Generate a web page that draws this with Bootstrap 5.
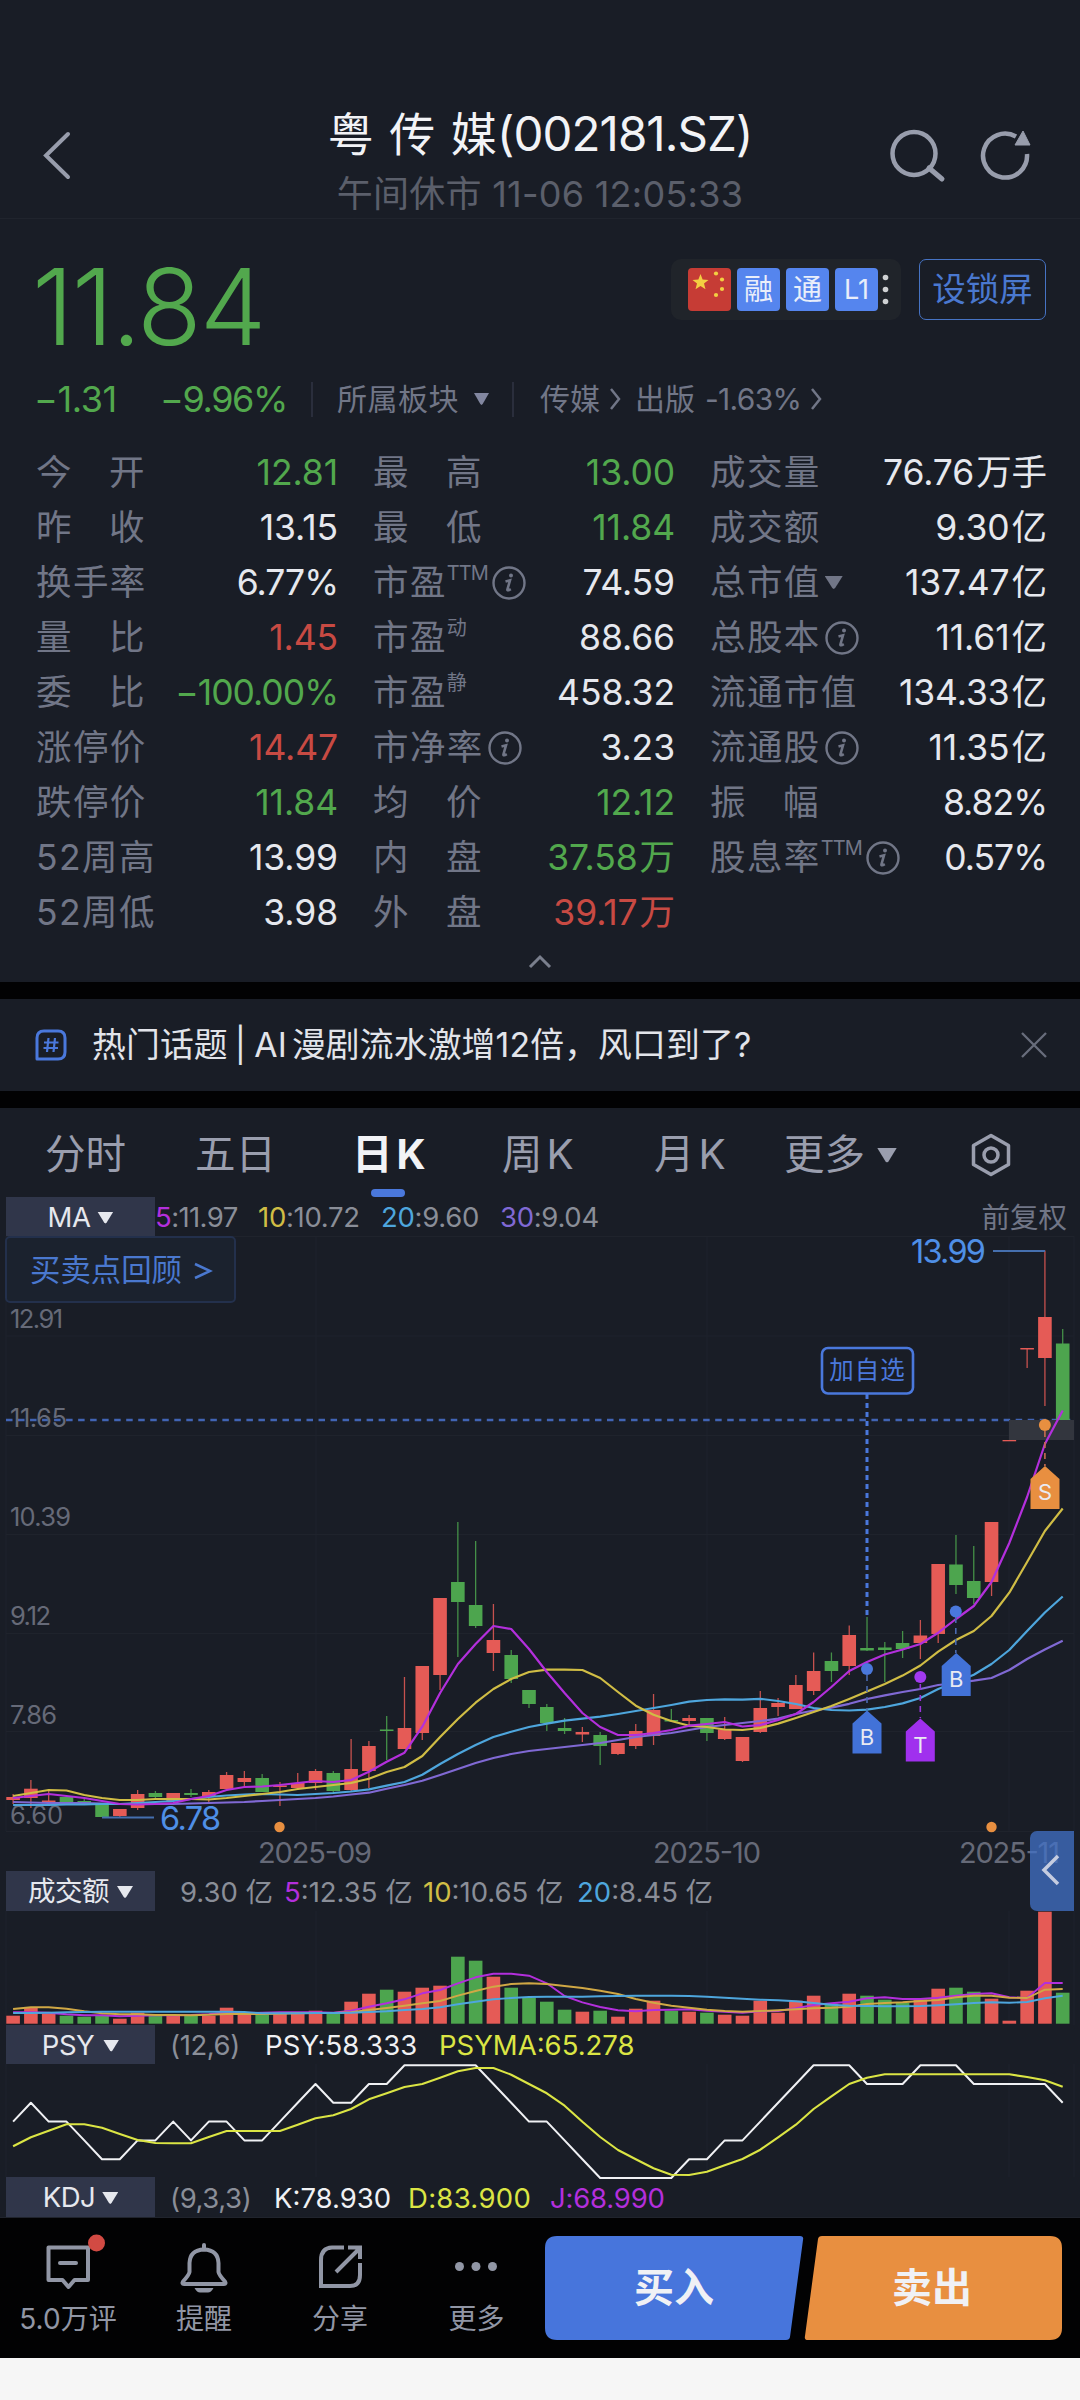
<!DOCTYPE html>
<html lang="zh-CN">
<head>
<meta charset="utf-8">
<meta name="viewport" content="width=device-width, initial-scale=1">
<title>粤传媒(002181.SZ)</title>
<link href="https://cdn.jsdelivr.net/npm/bootstrap@5.3.0/dist/css/bootstrap.min.css" rel="stylesheet">
<style>
:root{--ink:#e6e8ee;--dim:#717687;--soft:#8a8e98;--up:#c84a43;--down:#52a84d;--blue:#4a78dc;--panel:#191d26}
body{background:#f6f6f6;font-family:Inter,"Noto Sans CJK SC",sans-serif;color:var(--ink);line-height:1;width:1080px;margin:0}
svg{display:block;flex:none;overflow:visible}
.panel{background:var(--panel)}
.topbar{height:219px;padding:97px 50px 0 41px;border-bottom:1px solid #20242d}
.title{font-size:46px;line-height:74px;letter-spacing:.3px;word-spacing:2px;white-space:pre;color:#f2f3f6}
.title .lat{font-size:47.5px;letter-spacing:-.95px}
.subtitle{font-size:36px;line-height:46px;letter-spacing:.25px;color:#5b5f6b}
.quote{height:215px;padding:0 34px 0 36px}
.price{font-size:106px;font-weight:300;line-height:110px;letter-spacing:-2px;color:var(--down);margin-left:-4px;padding-top:33px}
.tags{background:#20242a;border-radius:10px;width:230px;height:61px;padding:0 9px 0 17px;gap:6px}
.tag{width:43px;height:43px;border-radius:4px;background:#5585ee;font-size:29px;color:#e9eefa}
.lockbtn{width:127px;height:61px;border:1.5px solid #4673c4;border-radius:7px;color:#4a78cf;font-size:33.5px;letter-spacing:0}
.chg{height:50px;color:var(--down);font-size:36px;margin-left:-2px}
.sect{font-size:30px;color:var(--dim)}
.vr1{width:2px;height:35px;background:#2a2e3c}
.stats{height:548px;padding:11px 33px 0 36px}
.stat{height:55px;font-size:35.5px}
.stat .k{color:var(--dim);letter-spacing:1.4px;display:flex;align-items:center}
.k3{width:110px;justify-content:space-between}
.stat .v{letter-spacing:-.1px;white-space:nowrap}
.stat .v small{font-size:inherit;margin-left:2px}
.stat .v.pc{letter-spacing:-1px}
.tiny{font-size:20px;letter-spacing:0;align-self:flex-start;margin-top:-2px}
.tiny.lat{letter-spacing:-.9px}
.up{color:var(--up)}.down{color:var(--down)}
.gap17{height:17px;background:#020203}
.topic{height:92px;padding:0 33px 0 35px;font-size:33.8px;color:#e2e4ea}
.tabs{height:89px;color:#9a9eae;font-size:40.5px}
.tabs .t{position:relative;height:89px;display:flex;align-items:center;padding-top:5px}
.tabs .t b{font-weight:inherit;margin-left:4px}
.tabs .on{color:#f2f3f6;font-weight:700;left:-1px}
.tabs .on::after{content:"";position:absolute;left:19px;bottom:0;width:34px;height:8px;border-radius:4px;background:#4a78dc}
.ind{height:39px;font-size:27.5px;color:var(--soft);padding-left:6px;white-space:pre}
.ind>span{padding-top:3px}
.pick{width:149px;height:39px;background:#30364a;color:#e6e8ee;letter-spacing:-.5px;padding-top:2px}
.tri{display:inline-block;width:16px;height:12px;background:currentColor;clip-path:polygon(0 0,100% 0,58% 92%,50% 100%,42% 92%)}
.review{position:absolute;left:5px;top:0;width:231px;height:67px;border:2px solid #23304c;border-radius:5px;background:#1b222e;color:#4a78cf;font-size:30.4px;padding-left:23px;padding-top:2px}
.drawer{position:absolute;left:1030px;top:595px;width:44px;height:80px;background:rgba(66,114,200,.75);border-radius:7px 0 0 7px;z-index:2}
.foot{background:#020203;height:141px;border-top:1px solid #20242d;color:#9196a5;font-size:28px}
.foot .item{height:139px;padding-top:16px}
.foot .item svg{margin-bottom:9px}
.trade{fill:#f0f1f5;font-size:40px;font-weight:700}
.m5{color:#b32fdc}.m10{color:#d0bd45}.m20{color:#4ea6dd}.m30{color:#8069d4}
.ax{fill:#666a78;font-size:25.5px}
.dt{fill:#666a78;font-size:29px}
</style>
<script src="https://cdn.jsdelivr.net/npm/bootstrap@5.3.0/dist/js/bootstrap.bundle.min.js"></script>
</head>
<body>
<svg width="0" height="0" class="position-absolute"><defs>
<symbol id="info" viewBox="0 0 34 34"><circle cx="17" cy="17" r="15.5" fill="none" stroke="#717687" stroke-width="2.4"/><circle cx="19" cy="9.5" r="2" fill="#717687"/><path d="M13.5 15.5l4.5-1.2-2.6 9.2q-.3 1.8 3.4-.4" fill="none" stroke="#717687" stroke-width="2.6"/></symbol>
</defs></svg>

<header class="panel topbar d-flex justify-content-between">
  <svg width="150" height="116" viewBox="0 0 150 116"><path d="M27 37L5 58.500L27 80" fill="none" stroke="#989dac" stroke-width="4" stroke-linecap="round"/></svg>
  <div class="text-center">
    <div class="title">粤 传 媒<span class="lat">(002181.SZ)</span></div>
    <div class="subtitle">午间休市 11-06 12:05:33</div>
  </div>
  <svg width="141" height="116" viewBox="889 97 141 116" fill="none" stroke="#989dac" stroke-width="4.500"><circle cx="914" cy="153.500" r="21.500"/><path d="M929 168L942 179" stroke-width="5" stroke-linecap="round"/><path d="M1016 136.500A22 22 0 1 0 1027 154"/><path d="M1023 131L1030 145H1015Z" fill="#989dac" stroke="#989dac" stroke-width="1"/></svg>
</header>

<section class="panel quote">
  <div class="d-flex justify-content-between" style="height:155px">
    <div class="price">11.84</div>
    <div class="d-flex" style="padding-top:40px;gap:18px">
      <div class="tags d-flex align-items-center">
        <svg width="43" height="43" viewBox="0 0 43 43"><rect width="43" height="43" rx="4" fill="#c63c35"/><path d="M12.500 6l2.100 5.500 5.900.4-4.500 3.700 1.500 5.700-5-3.200-5 3.200 1.500-5.700-4.500-3.700 5.900-.4z" fill="#f3cf42"/><g fill="#f3cf42"><circle cx="28" cy="5.500" r="2.100"/><circle cx="34" cy="11.500" r="2.100"/><circle cx="34" cy="21" r="2.100"/><circle cx="28" cy="27" r="2.100"/></g></svg>
        <div class="tag d-flex align-items-center justify-content-center">融</div>
        <div class="tag d-flex align-items-center justify-content-center">通</div>
        <div class="tag d-flex align-items-center justify-content-center" style="font-size:27px">L1</div>
        <svg width="6" height="43" viewBox="0 0 6 43" fill="#cfd1d3"><circle cx="1.500" cy="9.500" r="2.800"/><circle cx="1.500" cy="21.500" r="2.800"/><circle cx="1.500" cy="33.500" r="2.800"/></svg>
      </div>
      <div class="lockbtn d-flex align-items-center justify-content-center">设锁屏</div>
    </div>
  </div>
  <div class="chg d-flex align-items-center">
    <span style="width:126px;letter-spacing:-.4px">−1.31</span><span style="width:151px;letter-spacing:-1.400px">−9.96%</span>
    <i class="vr1"></i><span class="sect" style="margin-left:24px;letter-spacing:.5px">所属板块</span><i class="tri" style="width:15px;margin-left:15px;color:#8287a0"></i><i class="vr1" style="margin-left:23px"></i>
    <span class="sect d-flex align-items-center" style="margin-left:26px">传媒<svg width="12" height="22" viewBox="0 0 12 22" style="margin:0 14px 0 9px"><path d="M2 1l8 10-8 10" fill="none" stroke="#717687" stroke-width="2.500"/></svg>出版<span style="letter-spacing:-.7px;margin-left:10px">-1.63%</span><svg width="12" height="22" viewBox="0 0 12 22" style="margin-left:9px"><path d="M2 1l8 10-8 10" fill="none" stroke="#717687" stroke-width="2.500"/></svg></span>
  </div>
</section>

<section class="panel stats">
  <div class="d-flex" id="stats" style="gap:35px"></div>
  <svg class="mx-auto" width="26" height="16" viewBox="0 0 26 16" style="margin-top:13px"><path d="M1 14l10-10 10 10" fill="none" stroke="#7a7f8d" stroke-width="3"/></svg>
</section>
<div class="gap17"></div>
<section class="panel topic d-flex align-items-center">
  <svg width="32" height="32" viewBox="0 0 32 32" fill="none" stroke="#4a78dc" stroke-width="3"><path d="M9 2H23Q30 2 30 9V23Q30 30 23 30H2V9Q2 2 9 2Z" stroke-linejoin="round"/><path d="M13.500 9l-1.500 14M20 9l-1.500 14M9 13.500H23.500M8.500 19H23" stroke-width="2.200"/></svg>
  <span class="d-flex" style="margin-left:25px;letter-spacing:.15px">热门话题<span style="margin:0 8px 0 7px">|</span>AI<span style="margin-left:5px">漫剧流水激增12倍，风口到了?</span></span>
  <svg class="ms-auto" width="26" height="26" viewBox="0 0 26 26"><path d="M1 1L25 25M25 1L1 25" stroke="#686d7c" stroke-width="2.300"/></svg>
</section>
<div class="gap17"></div>

<main class="panel">
  <nav class="tabs d-flex" style="padding-left:45px">
    <div class="t" style="width:150px">分时</div><div class="t" style="width:158px">五日</div><div class="t on" style="width:149px">日<b>K</b></div><div class="t" style="width:152px">周<b>K</b></div><div class="t" style="width:130px">月<b>K</b></div>
    <div class="t" style="width:185px">更多<i class="tri" style="width:20px;height:15px;margin-left:12px"></i></div>
    <div class="t"><svg width="44" height="44" viewBox="0 0 44 44" fill="none" stroke="#9a9eae" stroke-width="3.500"><path d="M22 2.500L39.500 12.500V31.500L22 41.500L4.500 31.500V12.500Z" stroke-linejoin="round"/><circle cx="22" cy="22" r="7"/></svg></div>
  </nav>
  <div class="ind d-flex align-items-center">
    <div class="pick d-flex align-items-center justify-content-center" style="gap:7px">MA<i class="tri"></i></div>
    <span style="width:103px;letter-spacing:-.6px"><span class="m5">5</span>:11.97</span><span style="width:123px;letter-spacing:-.3px"><span class="m10">10</span>:10.72</span><span style="width:119px;letter-spacing:-.3px"><span class="m20">20</span>:9.60</span><span style="letter-spacing:-.3px"><span class="m30">30</span>:9.04</span>
    <span class="ms-auto" style="margin-right:13px;font-size:28.500px;color:#717687">前复权</span>
  </div>
  <div class="position-relative">
    <svg id="kline" width="1080" height="635" viewBox="0 1236 1080 635"></svg>
    <div class="review d-flex align-items-center">买卖点回顾<svg width="20" height="18" viewBox="0 0 20 18" style="margin-left:11px"><path d="M2 2l15 7-15 7" fill="none" stroke="#4a78cf" stroke-width="2.500"/></svg></div>
    <div class="drawer"><svg width="44" height="80" viewBox="0 0 44 80"><path d="M28 25L14 39L28 53" fill="none" stroke="#c5cce0" stroke-width="3.500"/></svg></div>
  </div>
  <div class="ind d-flex align-items-center" style="height:40px">
    <div class="pick d-flex align-items-center justify-content-center" style="gap:8px;height:40px">成交额<i class="tri"></i></div>
    <span style="margin-left:25px;width:104px">9.30 亿</span><span style="width:139px"><span class="m5">5</span>:12.35 亿</span><span style="width:154px"><span class="m10">10</span>:10.65 亿</span><span><span class="m20">20</span>:8.45 亿</span>
  </div>
  <svg id="vol" width="1080" height="114" viewBox="0 1911 1080 114"></svg>
  <div class="ind d-flex align-items-center">
    <div class="pick d-flex align-items-center justify-content-center" style="gap:9px">PSY<i class="tri"></i></div>
    <span style="margin-left:15px;width:95px;letter-spacing:-.4px">(12,6)</span><span style="width:174px;color:#f0f1f4;letter-spacing:.1px">PSY:58.333</span><span style="color:#dbe544">PSYMA:65.278</span>
  </div>
  <svg id="psy" width="1080" height="113" viewBox="0 2064 1080 113"></svg>
  <div class="ind d-flex align-items-center" style="height:40px">
    <div class="pick d-flex align-items-center justify-content-center" style="gap:7px;height:40px">KDJ<i class="tri"></i></div>
    <span style="margin-left:15px;width:104px;letter-spacing:-.4px">(9,3,3)</span><span style="width:134px;color:#f0f1f4">K:78.930</span><span style="width:142px;color:#dbe544;letter-spacing:.3px">D:83.900</span><span class="m5" style="letter-spacing:-.2px">J:68.990</span>
  </div>
</main>

<footer class="foot d-flex">
  <div class="item d-flex flex-column align-items-center" style="width:136px"><svg width="80" height="62" viewBox="28 2239 80 62" fill="none" stroke="#9196a5" stroke-width="4"><path d="M48.500 2252.500H88V2285H74.500L68.500 2292L62.500 2285H48.500Z" stroke-linejoin="round"/><path d="M60 2268H76" stroke-linecap="round"/><circle cx="96.500" cy="2248" r="8.500" fill="#d24a43" stroke="none"/></svg>5.0万评</div>
  <div class="item d-flex flex-column align-items-center" style="width:136px"><svg width="60" height="62" viewBox="174 2239 60 62" fill="none" stroke="#9196a5" stroke-width="4"><path d="M183 2286.500Q189 2280 189.500 2277V2268Q190 2255 204 2254.500Q218 2255 218.500 2268V2277Q219 2280 225 2286.500Q226.500 2289 224 2289H184Q181.500 2289 183 2286.500Z" stroke-linejoin="round"/><path d="M204 2254V2250" stroke-linecap="round"/><path d="M194.500 2293H213.500Q211 2297.500 208 2297.500H200Q197 2297.500 194.500 2293Z" fill="#9196a5" stroke="none"/></svg>提醒</div>
  <div class="item d-flex flex-column align-items-center" style="width:136px"><svg width="60" height="62" viewBox="310 2239 60 62" fill="none" stroke="#9196a5" stroke-width="4"><path d="M344 2252.500H332Q321 2253 321 2265V2291H350Q360 2291 360 2280V2268"/><path d="M336 2277L359 2254M348 2252.500H360V2264"/></svg>分享</div>
  <div class="item d-flex flex-column align-items-center" style="width:137px"><svg width="60" height="62" viewBox="447 2239 60 62" fill="#9196a5"><circle cx="459.500" cy="2271.500" r="4.500"/><circle cx="476" cy="2271.500" r="4.500"/><circle cx="492.500" cy="2271.500" r="4.500"/></svg>更多</div>
  <svg width="535" height="139" viewBox="545 2218 535 139"><path d="M557 2236H800Q804 2236 803 2240L790 2337Q789.500 2340 786 2340H557Q545 2340 545 2328V2248Q545 2236 557 2236Z" fill="#4775dc"/><path d="M822 2236H1050Q1062 2236 1062 2248V2328Q1062 2340 1050 2340H808Q804 2340 805 2336L818 2239Q818.500 2236 822 2236Z" fill="#e88f40"/><g class="trade" text-anchor="middle"><text x="674" y="2302">买入</text><text x="932" y="2302">卖出</text></g></svg>
</footer>

<script>
// Quote table: label, value, direction (u/d), superscript, mark after the label
const cols=[
 [302,[["今 开","12.81","d"],["昨 收","13.15"],["换手率","6.77%"],["量 比","1.45","u"],["委 比","−100.00%","d"],["涨停价","14.47","u"],["跌停价","11.84","d"],["52周高","13.99"],["52周低","3.98"]]],
 [302,[["最 高","13.00","d"],["最 低","11.84","d"],["市盈","74.59","","TTM","i"],["市盈","88.66","","动"],["市盈","458.32","","静"],["市净率","3.23","","","i"],["均 价","12.12","d"],["内 盘","37.58万","d"],["外 盘","39.17万","u"]]],
 [337,[["成交量","76.76万手"],["成交额","9.30亿"],["总市值","137.47亿","","","v"],["总股本","11.61亿","","","i"],["流通市值","134.33亿"],["流通股","11.35亿","","","i"],["振 幅","8.82%"],["股息率","0.57%","","TTM","i"]]]];
document.getElementById('stats').innerHTML=cols.map(([w,rows])=>`<div style="width:${w}px;height:495px">`+rows.map(([k,v,c,s,m])=>{
  const p=k.split(' ');
  const lab=p.length>1?`<span class="k k3"><span>${p[0]}</span><span>${p[1]}</span></span>`:`<span class="k"><span>${k}</span>${s?`<span class="tiny ${s=='TTM'?'lat':''}">${s}</span>`:''}${m=='i'?'<svg width="34" height="34" style="margin-left:4px"><use href="#info"/></svg>':m=='v'?'<i class="tri" style="width:18px;height:13px;margin-left:4px"></i>':''}</span>`;
  const val=v.replace(/[万亿]手?/,u=>`<small>${u}</small>`);
  return `<div class="stat d-flex align-items-center justify-content-between">${lab}<span class="v ${v.includes('%')?'pc':''} ${c=='u'?'up':c=='d'?'down':''}">${val}</span></div>`}).join('')+'</div>').join('');

const X=i=>13.1+17.79*i, RED='#e55b56', GRN='#4da54e';
const line=(a,c,w=2.2)=>`<path d="M${a.map((y,i)=>X(i).toFixed(1)+' '+y).join('L')}" fill="none" stroke="${c}" stroke-width="${w}" stroke-linejoin="round"/>`;
const up='RRRGGGRRGRGRRRGRRRGRRGRRRGGRGGGGRGRRRGRGRRRRRRGRGGGRRGGRRRRG';
// each candle: body top, body bottom, high, low
const K=[[1797,1800,1794,1804],[1788.7,1798,1780,1808],[1800.5,1802,1789,1802],[1797,1802,1796,1804],[1801,1803,1798,1803],[1804.7,1817,1803,1817],[1809,1816,1809,1817],[1794,1808,1790,1810],[1793,1797,1791,1799],[1793,1801,1793,1801],[1793,1795,1789,1797],[1792,1796,1790,1804],[1775,1789,1772,1791],[1778,1782,1771,1787],[1778,1792,1774,1792],[1785.5,1787,1782,1806],[1783,1788,1773,1790],[1771,1783,1769,1790],[1773,1791,1771,1793],[1769,1790,1739,1791],[1746,1771,1741,1788],[1729.5,1731,1716,1760],[1728,1749,1677,1749],[1666,1733,1666,1740],[1598,1675,1598,1690],[1582,1602,1522,1657],[1605,1626,1541,1628],[1640,1653,1604,1671],[1655,1679,1650,1683],[1690,1704,1690,1708],[1707,1723,1704,1731],[1728,1731,1718,1734],[1732,1734.5,1727,1742],[1735,1746,1732,1765],[1743,1754,1743,1755],[1731,1746,1724,1749],[1710,1736,1694,1745],[1720,1721.5,1709,1722],[1718,1721,1715,1727],[1718,1733,1718,1741],[1729.5,1739,1717,1740],[1737,1761,1737,1762],[1708,1732,1691,1733],[1703,1707,1698,1716],[1685,1709,1675,1709],[1671,1691,1652.5,1695],[1661,1671,1652.5,1682],[1635,1666,1625.5,1675],[1648,1650.5,1617,1651],[1647.5,1650,1642,1682],[1643,1649,1631,1658],[1635.5,1643,1620,1659],[1564,1634,1564,1643],[1564.5,1585,1535,1594],[1581,1598,1546,1604],[1522,1582,1522,1596],[1440,1441.3,1440,1441],[1348,1349.5,1348,1368],[1317,1358,1250.5,1406],[1343.5,1420,1329,1420]];
const m5=[1798,1796,1794,1796,1798,1801,1804,1804.5,1804,1803,1799,1796,1790,1787,1786.5,1785,1783,1781,1782,1780,1771.7,1761.7,1752.7,1726.7,1693,1664,1644,1626,1629,1649,1672,1693,1713,1727,1735,1735,1733,1730,1725.7,1724,1722,1726.5,1725,1720,1714,1702,1687,1671,1662,1654.5,1649.5,1644,1632.7,1619,1606,1582,1543,1497,1444,1410.5];
const m10=[1796,1793,1790,1790.5,1795,1798,1800,1800,1799,1799,1799,1799.5,1798,1796,1794,1792,1789,1787,1785,1783,1778.7,1772,1767,1756,1737,1719,1702.7,1689,1679,1672,1669.7,1669.7,1670,1678,1692,1705.7,1714.7,1721,1725.7,1727,1729.5,1730,1728,1723.6,1718,1712,1706,1699,1691.6,1684,1675.6,1665.5,1651.6,1640,1631,1616,1592.7,1562,1531,1508.5];
const m20=[1805,1805,1805,1804.5,1804.5,1804,1804,1803,1802,1801,1799,1797,1795.5,1794.5,1794,1794.5,1795,1794,1793,1791.5,1789.3,1785.7,1782,1774.7,1764,1754,1745,1737,1731.7,1727,1723.7,1720.7,1718.7,1716.7,1714,1711,1708,1705,1701.7,1700,1699.4,1699.6,1698.8,1701,1704,1708,1710,1710.5,1709.7,1707,1703.4,1698,1689,1682,1674.8,1664,1650,1631,1612.5,1596.5];
const m30=[1802,1802.5,1803,1803,1803,1803.5,1804,1804,1804,1804,1803.5,1803,1802.5,1802,1801,1800,1799,1798,1796.5,1794.5,1792.7,1788.7,1785,1780.7,1775,1769,1763,1758,1754,1751,1749,1747,1745,1743,1740,1737,1735,1733,1730,1727,1725,1723,1721,1718.6,1714,1710.5,1707.6,1703.8,1699,1695.4,1692,1689,1685,1683,1680.7,1678,1670,1659,1649.5,1640.7];
const vgrid=(a,b)=>[6,316,707,1009,1074].map(x=>`<path d="M${x} ${a}V${b}" stroke="#1f232c"/>`).join('');
const flag=(x,y,c,t)=>`<path d="M${x} ${y}L${x+14.5} ${y+13}V${y+43}H${x-14.5}V${y+13}Z" fill="${c}"/><text x="${x}" y="${y+34}" fill="#e9eaf2" font-size="22" text-anchor="middle">${t}</text>`;
const stem=(x,a,b,c)=>`<path d="M${x} ${a}V${b}" stroke="${c}" stroke-width="1.6" stroke-dasharray="6 5"/>`;
let s=vgrid(1236,1831)+[1236.5,1336,1435.5,1534.5,1633.5,1731.5,1831.5].map(y=>`<path d="M6 ${y}H1074" stroke="#1f232c"/>`).join('');
s+='<path d="M6 1420H1074" stroke="#4164b4" stroke-width="2.4" stroke-dasharray="6.5 5.52"/>';
[["12.91",1328,53],["11.65",1427,57],["10.39",1526,61],["9.12",1625,41],["7.86",1724,47],["6.60",1824,53]].forEach(([t,y,w])=>s+=`<text class="ax" x="10" y="${y}" textLength="${w}">${t}</text>`);
s+='<rect x="1009" y="1420" width="65" height="20" fill="#33363e"/>';
K.forEach(([a,b,h,l],i)=>{const c=up[i]=='R'?RED:GRN;s+=`<path d="M${X(i)} ${h}V${l}" stroke="${c}" stroke-width="1.3" opacity=".85"/><rect x="${X(i)-6.8}" y="${a}" width="13.600" height="${b-a}" fill="${c}"/>`});
s+=line(m30,'#8069d4')+line(m20,'#4ea6dd')+line(m10,'#d0bd45')+line(m5,'#b32fdc');
s+='<path d="M993 1251H1045M102 1817.5H154" stroke="#456fae" stroke-width="1.8"/><g fill="#4f8fe6" font-size="32.5"><text x="911" y="1263" textLength="75">13.99</text><text x="160" y="1830" textLength="61">6.78</text></g>';
s+='<path d="M867 1394V1617" stroke="#4a78dc" stroke-width="3" stroke-dasharray="5 4"/><rect x="822" y="1348" width="91" height="45.500" rx="6" fill="#191d26" stroke="#4a78dc" stroke-width="2.6"/><text x="867.5" y="1379" font-size="24.500" text-anchor="middle" fill="#4a78dc" letter-spacing="1">加自选</text>';
s+=stem(867,1675,1710,'#4a6ab0')+stem(955.8,1617,1653,'#4a6ab0')+stem(920.3,1684,1718,'#9a35dc')+stem(1044.9,1431,1466,'#c86a50');
s+=[[867,1669,'#4a78dc'],[955.8,1611.5,'#4a78dc'],[920.3,1677,'#a23af0'],[1044.9,1425,'#e88f40']].map(([x,y,c])=>`<circle cx="${x}" cy="${y}" r="6" fill="${c}"/>`).join('')+'<circle cx="279.500" cy="1827" r="5.200" fill="#e88f40"/><circle cx="991.500" cy="1827" r="5.200" fill="#e88f40"/>';
s+=flag(867,1710.5,'#4272d8','B')+flag(920.3,1718.5,'#a030ee','T')+flag(956.2,1653,'#4272d8','B')+flag(1045,1466,'#e88f40','S');
s+='<text class="dt" x="258" y="1863" textLength="114">2025-09</text><text class="dt" x="653" y="1863" textLength="108">2025-10</text><text class="dt" x="959" y="1863" textLength="101">2025-11</text>';
kline.innerHTML=s;

// Turnover bars (height in px) and their averages (offset in thirds of a px)
const V=[8,16,10,8,7,8,5,11,8,8,8,8,16,10,9,10,10,13,10,22,30,34,32,36,38,67,63,47,36,26,22,14,12,13,7,15,23,13,12,11,9,8,23,11,23,28,20,30,28,24,21,24,35,36,32,25,3,33,112,31];
const third=a=>a.map(y=>(1820+y/3).toFixed(1));
const v5=[577,577,578,583,586,586,589,587,586,586,585,583,577,579,578,577,577,577,578,572,560,550,538,520,510,490,472,461,461,467,490,528,547,561,571,574,570,569,568,572,575,578,574,573,565,555,550,545,535,532,537,537,533,527,522,520,532,534,489,489];
const v10=[567,562,562,566,574,580,583,583,585,585,586,584,582,582,582,581,580,579,579,577,570,564,557,550,543,527,513,500,492,490,492,498,504,512,522,537,548,557,563,569,573,575,573,571,568,565,563,560,552,549,547,543,540,532,527,527,533,534,509,507];
const v20=[579,579,578,577,576,575,575,575,575,575,575,575,575,576,580,580,580,579,579,578,576,574,570,567,562,553,545,538,534,531,530,530,530,529,528,527,527,527,528,530,533,536,539,541,544,549,554,557,558,559,559,558,556,553,549,547,548,546,535,527];
vol.innerHTML=vgrid(1911,2025)+V.map((h,i)=>`<rect x="${X(i)-6.8}" y="${2023.7-h}" width="13.600" height="${h}" fill="${up[i]=='R'?RED:GRN}"/>`).join('')+line(third(v5),'#b32fdc',1.9)+line(third(v10),'#d0a845',1.9)+line(third(v20),'#4ea6dd',1.9);

const p=[3,2,3,3,4,5,5,4,4,3,4,3,3,4,4,3,2,1,2,2,1,1,0,0,0,0,0,1,2,3,3,4,5,6,6,6,6,6,5,5,4,4,3,2,1,0,0,0,1,1,1,0,0,0,1,1,1,1,1,2].map(k=>2065.2+18.8*k);
const pm=[979,952,932,913,913,923,942,960,969,970,970,951,933,933,933,933,914,895,886,867,838,820,801,792,773,754,744,744,764,792,820,857,905,951,990,1018,1045,1064,1065,1055,1036,1017,989,952,914,867,829,792,773,763,763,763,763,763,763,763,763,771,781,800];
psy.innerHTML=vgrid(2064,2177)+line(p,'#f0f1f4',2)+line(third(pm),'#dbe544',2.1);
</script>
</body>
</html>
